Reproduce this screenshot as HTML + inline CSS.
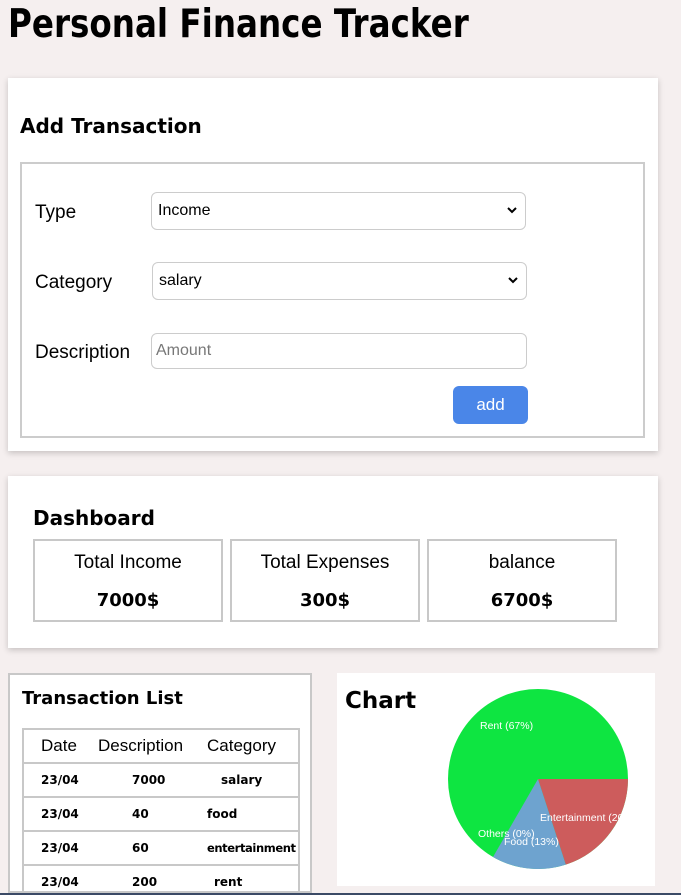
<!DOCTYPE html>
<html><head><style>
*{box-sizing:border-box;margin:0;padding:0}
html,body{width:681px;height:895px;overflow:hidden}
body{background:#f5efef;font-family:"DejaVu Sans","Liberation Sans",sans-serif;position:relative;color:#000}
.a{position:absolute}
h1{position:absolute;left:8px;top:2px;font-size:39px;font-weight:bold;transform:scaleX(0.835);transform-origin:0 0;white-space:nowrap}
.card{position:absolute;background:#fff;box-shadow:0 2px 6px rgba(0,0,0,.2)}
.box{position:absolute;border:2px solid #ccc}
.lbl{position:absolute;font-size:19px;font-family:"Liberation Sans",sans-serif}
.sel{position:absolute;border:1px solid #ccc;border-radius:6px;background:#fff;font-family:"Liberation Sans",sans-serif;font-size:16px;padding-left:6px;display:flex;align-items:center}
.sel svg{position:absolute;right:8px;top:50%;margin-top:-4px}
.dbox{position:absolute;top:539px;width:190px;height:83px;border:2px solid #c8c8c8;text-align:center;font-family:"Liberation Sans",sans-serif}
.dbox .t{font-size:19px;margin-top:11px}
.dbox .v{font-size:18px;font-weight:bold;margin-top:16px;font-family:"DejaVu Sans",sans-serif}
.row{position:absolute;left:22px;width:278px;height:35px;border:2px solid #c8c8c8;border-top:none;font-size:12px;font-weight:bold}
.row span{position:absolute;top:10px;white-space:nowrap}
</style></head><body>
<h1>Personal Finance Tracker</h1>
<div class="card" style="left:8px;top:78px;width:650px;height:373px"></div>
<div class="a" style="left:20px;top:114px;font-size:20px;font-weight:bold">Add Transaction</div>
<div class="box" style="left:20px;top:162px;width:625px;height:276px;background:#fff"></div>
<div class="lbl" style="left:35px;top:202px">Type</div>
<div class="lbl" style="left:35px;top:272px">Category</div>
<div class="lbl" style="left:35px;top:342px">Description</div>
<div class="sel" style="left:151px;top:192px;width:375px;height:38px">Income<svg width="10" height="7"><path d="M1 1L5 5L9 1" stroke="#000" stroke-width="2" fill="none"/></svg></div>
<div class="sel" style="left:152px;top:262px;width:375px;height:38px">salary<svg width="10" height="7"><path d="M1 1L5 5L9 1" stroke="#000" stroke-width="2" fill="none"/></svg></div>
<div class="sel" style="left:151px;top:333px;width:376px;height:36px;color:#777;padding-left:4px">Amount</div>
<div class="a" style="left:453px;top:386px;width:75px;height:38px;background:#4a86e8;border-radius:6px;color:#fff;font-family:'Liberation Sans',sans-serif;font-size:17px;text-align:center;line-height:37px">add</div>

<div class="card" style="left:8px;top:476px;width:650px;height:172px"></div>
<div class="a" style="left:33px;top:506px;font-size:20px;font-weight:bold">Dashboard</div>
<div class="dbox" style="left:33px"><div class="t">Total Income</div><div class="v">7000$</div></div>
<div class="dbox" style="left:230px"><div class="t">Total Expenses</div><div class="v">300$</div></div>
<div class="dbox" style="left:427px"><div class="t">balance</div><div class="v">6700$</div></div>

<div class="a" style="left:8px;top:673px;width:304px;height:220px;background:#fff;border:2px solid #c8c8c8"></div>
<div class="a" style="left:22px;top:688px;font-size:18px;font-weight:bold">Transaction List</div>
<div class="a" style="left:22px;top:728px;width:278px;height:36px;border:2px solid #c8c8c8;font-family:'Liberation Sans',sans-serif;font-size:17px">
<span class="a" style="left:17px;top:6px">Date</span><span class="a" style="left:74px;top:6px">Description</span><span class="a" style="left:183px;top:6px">Category</span></div>
<div class="row" style="top:763px"><span style="left:17px">23/04</span><span style="left:108px">7000</span><span style="left:197px">salary</span></div>
<div class="row" style="top:797px"><span style="left:17px">23/04</span><span style="left:108px">40</span><span style="left:183px">food</span></div>
<div class="row" style="top:831px"><span style="left:17px;">23/04</span><span style="left:108px">60</span><span style="left:183px;font-size:11.5px;letter-spacing:-0.4px">entertainment</span></div>
<div class="row" style="top:865px"><span style="left:17px">23/04</span><span style="left:108px">200</span><span style="left:190px">rent</span></div>

<div class="a" style="left:337px;top:673px;width:318px;height:213px;background:#fff"></div>
<div class="a" style="left:345px;top:688px;font-size:23px;font-weight:bold">Chart</div>
<svg class="a" style="left:337px;top:673px" width="318" height="213" font-family="Liberation Sans,sans-serif" font-size="10.5" fill="#fff">
<circle cx="201" cy="106" r="90" fill="#0ee541"/>
<path d="M201 106L291 106A90 90 0 0 1 228.8 191.6Z" fill="#cd5c5c"/>
<path d="M201 106L228.8 191.6A90 90 0 0 1 156 184Z" fill="#6ea3cf"/>
<text x="143" y="56">Rent (67%)</text>
<text x="203" y="148">Entertainment (20%)</text>
<text x="141" y="164">Others (0%)</text>
<text x="167" y="172">Food (13%)</text>
</svg>
<div class="a" style="left:0;top:893px;width:681px;height:2px;background:#3b4a66"></div>
</body></html>
